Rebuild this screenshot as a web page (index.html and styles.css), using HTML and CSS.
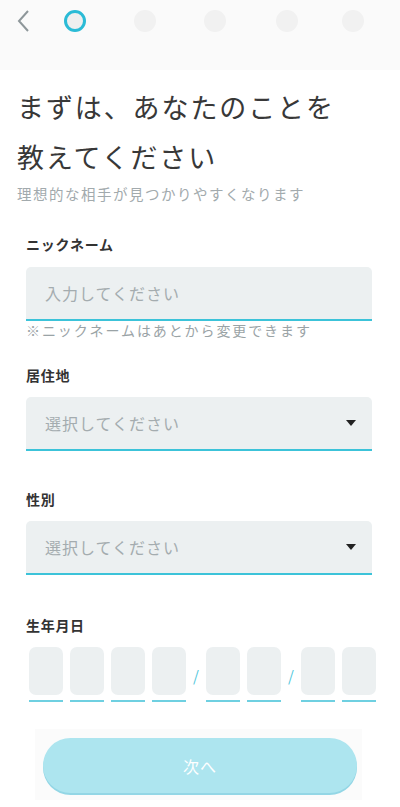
FILE: index.html
```html
<!DOCTYPE html>
<html lang="ja">
<head>
  <meta charset="UTF-8">
  <meta name="viewport" content="width=device-width, initial-scale=1.0">
  <title>プロフィール入力</title>
  <link rel="stylesheet" href="styles.css">
</head>
<body>
  <div class="header">
    <div class="steps">
      <svg class="back" width="12" height="22" viewBox="0 0 12 22">
        <path d="M11 1 L2 11 L11 21" fill="none" stroke="#8e979a" stroke-width="2"/>
      </svg>
      <span class="dot active"></span>
      <span class="dot d2"></span>
      <span class="dot d3"></span>
      <span class="dot d4"></span>
      <span class="dot d5"></span>
    </div>
  </div>

  <div class="intro">
    <h1>まずは、あなたのことを<br>教えてください</h1>
    <p class="sub">理想的な相手が見つかりやすくなります</p>
  </div>

  <form class="form">
    <label class="label first">ニックネーム</label>
    <div class="field">
      <span class="placeholder">入力してください</span>
    </div>
    <p class="note">※ニックネームはあとから変更できます</p>

    <label class="label">居住地</label>
    <div class="field select">
      <span class="placeholder">選択してください</span>
      <span class="caret"></span>
    </div>

    <label class="label gap-lg">性別</label>
    <div class="field select">
      <span class="placeholder">選択してください</span>
      <span class="caret"></span>
    </div>

    <label class="label gap-xl">生年月日</label>
    <div class="birth">
      <div class="box"></div>
      <div class="box"></div>
      <div class="box"></div>
      <div class="box"></div>
      <span class="slash">/</span>
      <div class="box"></div>
      <div class="box"></div>
      <span class="slash">/</span>
      <div class="box"></div>
      <div class="box"></div>
    </div>
  </form>

  <div class="footer">
    <button class="next" type="button">次へ</button>
  </div>
</body>
</html>
```

FILE: styles.css
```css
body {
  margin: 0;
  padding: 0;
  background: #fff;
  font-family: "Noto Sans CJK JP", "Noto Sans", sans-serif;
  color: #333;
}
.header {
  height: 70px;
  background: #fafafa;
}
.steps {
  height: 42px;
  display: flex;
  align-items: center;
  padding-left: 17px;
}
.back {
  display: block;
  margin-right: 35px;
}
.dot {
  width: 22px;
  height: 22px;
  border-radius: 50%;
  background: #f1f1f1;
  box-sizing: border-box;
}
.dot.active {
  border: 3px solid #2bbbd6;
  background: #efefef;
}
.d2 { margin-left: 48px; }
.d3 { margin-left: 48px; }
.d4 { margin-left: 50px; }
.d5 { margin-left: 44px; }

.intro {
  padding: 12px 18px 0 17px;
}
.intro h1 {
  margin: 0;
  font-size: 27px;
  font-weight: 400;
  line-height: 50px;
  letter-spacing: 1.9px;
  color: #383838;
}
.sub {
  margin: 2px 0 0;
  font-size: 14.5px;
  line-height: 20px;
  letter-spacing: 1.5px;
  color: #a2aaad;
}

.form {
  padding: 0 28px 0 26px;
}
.label {
  display: block;
  margin-top: 26px;
  font-size: 14px;
  font-weight: 700;
  line-height: 20px;
  letter-spacing: 0.7px;
  color: #333;
}
.label.first { margin-top: 30px; }
.label.gap-lg { margin-top: 38px; }
.label.gap-xl { margin-top: 40px; }

.field {
  margin-top: 13px;
  height: 54px;
  box-sizing: border-box;
  background: #ecf0f1;
  border-radius: 5px 5px 0 0;
  border-bottom: 2px solid #3cc3d9;
  display: flex;
  align-items: center;
  justify-content: space-between;
  padding: 0 16px 0 19px;
}
.select { margin-top: 12px; }
.placeholder {
  font-size: 16px;
  letter-spacing: 1px;
  color: #a4acaf;
}
.caret {
  width: 0;
  height: 0;
  border-left: 5.5px solid transparent;
  border-right: 5.5px solid transparent;
  border-top: 6px solid #222;
}
.note {
  margin: 0;
  font-size: 14px;
  line-height: 18px;
  letter-spacing: 1.9px;
  color: #9aa3a6;
}

.birth {
  margin-top: 12px;
  padding-left: 3px;
  display: flex;
  align-items: center;
  gap: 7px;
}
.box {
  flex: 0 0 34px;
  height: 48px;
  background: #ecf0f1;
  border-radius: 7px;
  position: relative;
  margin-bottom: 7px;
}
.box::after {
  content: "";
  position: absolute;
  left: 0;
  right: 0;
  bottom: -7px;
  height: 2px;
  background: #6fd0e1;
}
.slash {
  width: 6px;
  font-size: 15px;
  color: #52c7dc;
  text-align: center;
  margin-top: 2px;
}

.footer {
  margin: 27px 38px 0 35px;
  padding: 9px 5px 7px 8px;
  background: #fbfbfb;
}
.next {
  display: block;
  width: 100%;
  height: 55px;
  border: none;
  border-radius: 28px;
  background: #ade5ef;
  box-shadow: 0 2px 0 #93d6e5;
  color: #fff;
  font-family: "Noto Sans CJK JP", sans-serif;
  font-size: 16px;
  letter-spacing: 1px;
}
```
